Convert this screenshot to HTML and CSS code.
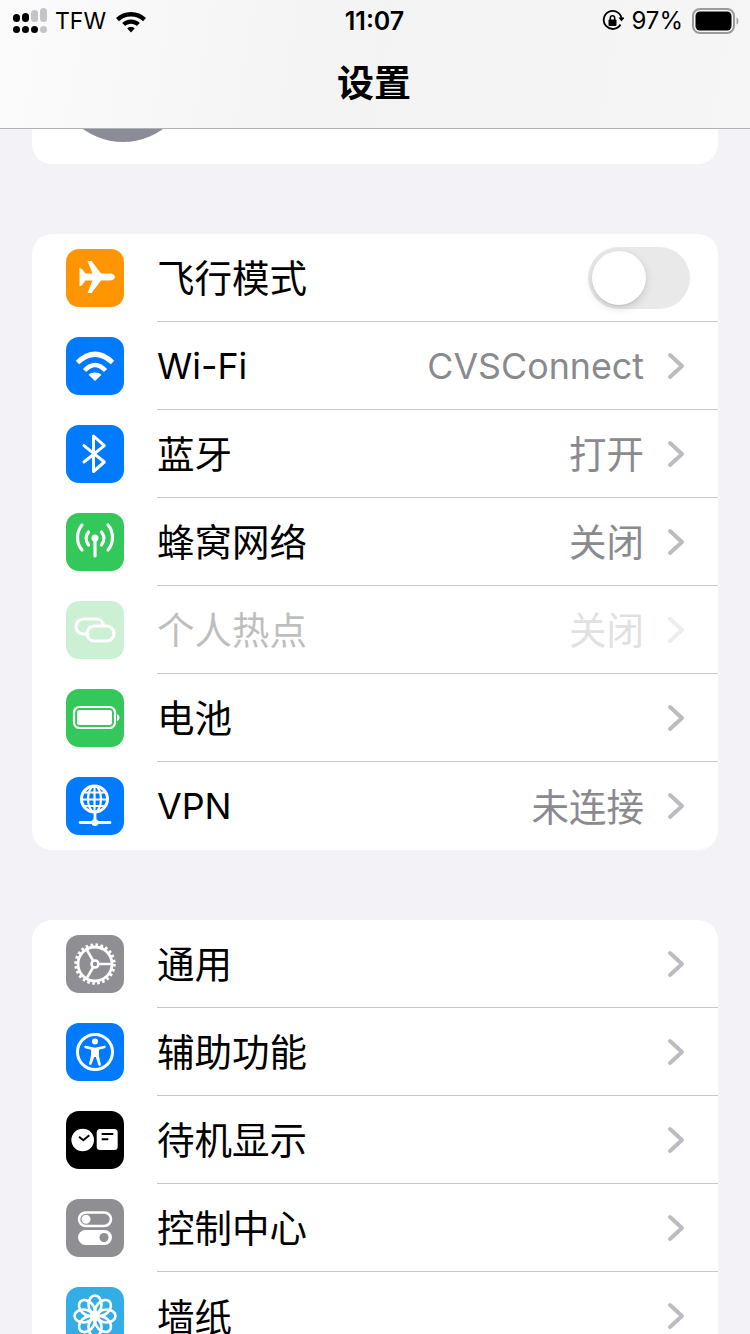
FILE: index.html

```html
<!DOCTYPE html>
<html lang="zh-CN">
<head>
  <meta charset="UTF-8">
  <title>设置</title>
  <link rel="stylesheet" href="styles.css">
</head>
<body>
  <header class="nav">
    <div class="status">
      <div class="status-left">
        <svg class="signal" width="34" height="26" viewBox="0 0 34 26">
          <g fill="#000"><rect x="0" y="6" width="7" height="8" rx="3.500"/><rect x="9" y="5" width="7" height="9" rx="3.500"/><rect x="0" y="18" width="7" height="7" rx="3.500"/><rect x="9" y="18" width="7" height="7" rx="3.500"/><rect x="18" y="18" width="7" height="7" rx="3.500"/></g>
          <g fill="#c4c4c6"><rect x="18" y="2" width="7" height="12" rx="3.500"/><rect x="27" y="0" width="7" height="14" rx="3.500"/><rect x="27" y="18" width="7" height="7" rx="3.500"/></g>
        </svg>
        <span class="carrier">TFW</span>
        <svg width="32" height="24" viewBox="0 0 32 24"><path d="M16 3C10 3 5 5.200 1 9l3 3.200C7 9.200 11.200 7.400 16 7.400s9 1.800 12 4.800L31 9c-4-3.800-9-6-15-6zM16 10.500c-3.500 0-6.500 1.300-8.800 3.500l3 3.100c1.500-1.400 3.500-2.300 5.800-2.300s4.300.9 5.800 2.300l3-3.100c-2.300-2.200-5.300-3.500-8.800-3.500zM16 18c-1.500 0-2.800.5-3.700 1.400L16 23.500l3.700-4.100C18.800 18.500 17.500 18 16 18z"/></svg>
      </div>
      <div class="status-time">11:07</div>
      <div class="status-right">
        <svg class="lock" width="22" height="22" viewBox="0 0 22 22"><path d="M18.500 14.500A9 9 0 1 1 19.500 8" fill="none" stroke="#000" stroke-width="1.800"/><path d="M16.500 7.500h6l-3 4z"/><rect x="6.500" y="9.500" width="8" height="6.500" rx="1"/><path d="M8.300 10V8a2.200 2.200 0 0 1 4.400 0v2" fill="none" stroke="#000" stroke-width="1.500"/></svg>
        <span class="percent">97%</span>
        <svg width="48" height="26" viewBox="0 0 48 26"><rect x="1" y="1" width="41" height="24" rx="7" fill="none" stroke="#9a9a9c" stroke-width="2"/><rect x="3.500" y="3.500" width="36" height="19" rx="4.500"/><path d="M44.500 9.500c1.500.5 2 2 2 3.500s-.5 3-2 3.500z" fill="#a8a8aa"/></svg>
      </div>
    </div>
    <h1 class="nav-title">设置</h1>
  </header>

  <main class="content">
    <section class="group profile"><div class="avatar"></div></section>

    <section class="group">
      <div class="row">
        <div class="icon orange"><svg width="58" height="58" viewBox="0 0 58 58"><path fill="#fff" d="M49 28c0 2-3 3.500-5 3.500h-9L25.500 44h-4l5-12.500h-7l-3 4Q15 37 13.500 37V19Q15 19 16.500 20.500l3 4h7L21.500 12h4L35 24.500h9c2 0 5 1.500 5 3.500z"/></svg></div>
        <div class="row-body"><span class="label">飞行模式</span><div class="toggle"><div class="knob"></div></div></div>
      </div>
      <div class="row">
        <div class="icon blue"><svg width="58" height="58" viewBox="0 0 58 58"><g fill="none" stroke="#fff"><path stroke-width="5" d="M11.500 25.500Q29 9 46.500 25.500"/><path stroke-width="4.500" d="M18.500 33.500Q29 22.500 39.500 33.500"/></g><path fill="#fff" d="M29 35.500c-2.500 0-5 .8-6.500 2.300L29 44l6.500-6.200c-1.500-1.500-4-2.300-6.500-2.300z"/></svg></div>
        <div class="row-body"><span class="label latin">Wi-Fi</span><span class="value latin">CVSConnect</span><svg class="chevron" width="18" height="28" viewBox="0 0 18 28"><path d="M3 3l12 11L3 25"/></svg></div>
      </div>
      <div class="row">
        <div class="icon blue"><svg width="58" height="58" viewBox="0 0 58 58"><path fill="none" stroke="#fff" stroke-width="3" stroke-linecap="round" stroke-linejoin="round" d="M18 20.700L38.300 37 27.500 46.500V11L38.300 20.700 18 37"/></svg></div>
        <div class="row-body"><span class="label">蓝牙</span><span class="value">打开</span><svg class="chevron" width="18" height="28" viewBox="0 0 18 28"><path d="M3 3l12 11L3 25"/></svg></div>
      </div>
      <div class="row">
        <div class="icon green"><svg width="58" height="58" viewBox="0 0 58 58"><g fill="none" stroke="#fff" stroke-width="3.200" stroke-linecap="round"><path d="M29 26v17"/><path d="M22.500 32c-3-4-3-9 0-13"/><path d="M35.500 32c3-4 3-9 0-13"/><path d="M16 37c-6-7-6-18 0-25"/><path d="M42 37c6-7 6-18 0-25"/></g><circle cx="29" cy="25" r="3.500" fill="#fff"/></svg></div>
        <div class="row-body"><span class="label">蜂窝网络</span><span class="value">关闭</span><svg class="chevron" width="18" height="28" viewBox="0 0 18 28"><path d="M3 3l12 11L3 25"/></svg></div>
      </div>
      <div class="row disabled">
        <div class="icon green"><svg width="58" height="58" viewBox="0 0 58 58"><g fill="none" stroke="#fff" stroke-width="3.200" stroke-linecap="round"><path d="M22.500 33h-5a7.500 7.500 0 0 1 0-15h13a7.500 7.500 0 0 1 7 7"/><rect x="21" y="25" width="27" height="15" rx="7.500"/></g></svg></div>
        <div class="row-body"><span class="label">个人热点</span><span class="value">关闭</span><svg class="chevron" width="18" height="28" viewBox="0 0 18 28"><path d="M3 3l12 11L3 25"/></svg></div>
      </div>
      <div class="row">
        <div class="icon green"><svg width="58" height="58" viewBox="0 0 58 58"><rect x="8" y="18" width="41" height="21" rx="5.500" fill="none" stroke="#fff" stroke-width="2.200"/><rect x="11" y="21" width="35" height="15" rx="2.500" fill="#fff"/><path d="M51 25c1.500.5 2.500 2 2.500 3.500s-1 3-2.500 3.500z" fill="#fff"/></svg></div>
        <div class="row-body"><span class="label">电池</span><svg class="chevron" width="18" height="28" viewBox="0 0 18 28"><path d="M3 3l12 11L3 25"/></svg></div>
      </div>
      <div class="row">
        <div class="icon blue"><svg width="58" height="58" viewBox="0 0 58 58"><g fill="none" stroke="#fff"><circle cx="28.500" cy="22" r="13" stroke-width="3"/><ellipse cx="28.500" cy="22" rx="6.500" ry="13" stroke-width="2.200"/><path stroke-width="2.200" d="M28.500 9v26M17 15.500h23M15 22.500h27M17 29h23"/></g><path fill="none" stroke="#fff" stroke-width="2.800" stroke-linecap="round" d="M29 36v9M14 45.500h30"/><circle cx="29" cy="45.500" r="3.500" fill="#fff"/></svg></div>
        <div class="row-body"><span class="label latin">VPN</span><span class="value">未连接</span><svg class="chevron" width="18" height="28" viewBox="0 0 18 28"><path d="M3 3l12 11L3 25"/></svg></div>
      </div>
    </section>

    <section class="group">
      <div class="row">
        <div class="icon gray"><svg width="58" height="58" viewBox="0 0 58 58"><circle cx="29" cy="29" r="19" fill="none" stroke="#fff" stroke-width="3.400" stroke-dasharray="2.600 2.370"/><circle cx="29" cy="29" r="17" fill="none" stroke="#fff" stroke-width="2.800"/><g fill="none" stroke="#fff" stroke-width="2.600"><circle cx="29" cy="29" r="3.500"/><path d="M32.500 29H46M27.250 26L21 15.100M27.250 32L21 42.900"/></g></svg></div>
        <div class="row-body"><span class="label">通用</span><svg class="chevron" width="18" height="28" viewBox="0 0 18 28"><path d="M3 3l12 11L3 25"/></svg></div>
      </div>
      <div class="row">
        <div class="icon blue"><svg width="58" height="58" viewBox="0 0 58 58"><circle cx="29" cy="29" r="17.500" fill="none" stroke="#fff" stroke-width="3"/><circle cx="29" cy="18.500" r="3" fill="#fff"/><path fill="#fff" d="M19.800 22.800c-.8-.2-1.400.3-1.500 1-.1.700.3 1.200 1 1.400l5.700 1.500v5.500l-1.800 8c-.2.800.2 1.400.9 1.600.7.200 1.300-.2 1.500-.9L28.200 34h1.600l2.600 7.900c.2.700.8 1.100 1.500.9.700-.2 1.100-.8.900-1.600l-1.800-8V26.700l5.700-1.500c.7-.2 1.100-.7 1-1.400-.1-.7-.7-1.200-1.500-1L29 24.800z"/></svg></div>
        <div class="row-body"><span class="label">辅助功能</span><svg class="chevron" width="18" height="28" viewBox="0 0 18 28"><path d="M3 3l12 11L3 25"/></svg></div>
      </div>
      <div class="row">
        <div class="icon black"><svg width="58" height="58" viewBox="0 0 58 58"><circle cx="16.700" cy="29" r="11.300" fill="#fff"/><path d="M13 25.700l4.300 3.600 6-5" fill="none" stroke="#000" stroke-width="2"/><rect x="30.700" y="18" width="21" height="21" rx="3.500" fill="#fff"/><path d="M35.700 23h11.600M35.700 28.300h6.600" stroke="#000" stroke-width="2"/></svg></div>
        <div class="row-body"><span class="label">待机显示</span><svg class="chevron" width="18" height="28" viewBox="0 0 18 28"><path d="M3 3l12 11L3 25"/></svg></div>
      </div>
      <div class="row">
        <div class="icon gray"><svg width="58" height="58" viewBox="0 0 58 58"><rect x="13" y="13.500" width="32" height="13.500" rx="6.750" fill="none" stroke="#fff" stroke-width="2.600"/><circle cx="20" cy="20.300" r="4.500" fill="#fff"/><rect x="12" y="31" width="34" height="15" rx="7.500" fill="#fff"/><circle cx="38" cy="38.500" r="4.500" fill="#8e8e93"/></svg></div>
        <div class="row-body"><span class="label">控制中心</span><svg class="chevron" width="18" height="28" viewBox="0 0 18 28"><path d="M3 3l12 11L3 25"/></svg></div>
      </div>
      <div class="row">
        <div class="icon sky"><svg width="58" height="58" viewBox="0 0 58 58"><g fill="none" stroke="#fff" stroke-width="2.600"><circle cx="29" cy="29" r="3.500" fill="#fff"/><ellipse cx="29" cy="17.500" rx="6.500" ry="9"/><ellipse cx="29" cy="40.500" rx="6.500" ry="9"/><ellipse cx="17.500" cy="29" rx="9" ry="6.500"/><ellipse cx="40.500" cy="29" rx="9" ry="6.500"/><ellipse cx="29" cy="17.500" rx="6.500" ry="9" transform="rotate(45 29 29)"/><ellipse cx="29" cy="40.500" rx="6.500" ry="9" transform="rotate(45 29 29)"/><ellipse cx="17.500" cy="29" rx="9" ry="6.500" transform="rotate(45 29 29)"/><ellipse cx="40.500" cy="29" rx="9" ry="6.500" transform="rotate(45 29 29)"/></g></svg></div>
        <div class="row-body"><span class="label">墙纸</span><svg class="chevron" width="18" height="28" viewBox="0 0 18 28"><path d="M3 3l12 11L3 25"/></svg></div>
      </div>
    </section>
  </main>
</body>
</html>
```

FILE: styles.css

```css
html, body {
  margin: 0;
  height: 1334px;
  overflow: hidden;
}
body {
  background-color: #f2f2f7;
  color: #000;
  font-family: "Inter", "Noto Sans CJK SC", sans-serif;
}

/* top bar */
.nav {
  height: 128px;
  background: linear-gradient(100deg, #fbfbfc 0%, #f3f3f4 50%, #f6f6f7 100%);
  border-bottom: 1px solid #b2b2b4;
}
.status {
  height: 41px;
  padding: 0 10px 0 13px;
  display: grid;
  grid-template-columns: 1fr auto 1fr;
  align-items: center;
  font-size: 25px;
}
.status-left, .status-right {
  display: flex;
  align-items: center;
}
.status-left { gap: 9px; }
.signal { margin-right: -1px; }
.carrier { font-size: 23px; }
.status-right {
  justify-content: flex-end;
  gap: 9px;
}
.lock { margin-right: -2px; }
.percent { font-size: 24px; }
.status-time {
  font-weight: 600;
  margin-right: 4px;
}
.nav-title {
  margin: 0;
  padding-right: 2px;
  font-size: 37px;
  line-height: 86px;
  font-weight: 700;
  text-align: center;
}

/* list */
.group {
  background: #fff;
  border-radius: 20px;
  margin: 0 32px 70px;
  overflow: hidden;
}
.profile {
  height: 35px;
  border-radius: 0 0 20px 20px;
}
.avatar {
  width: 136px;
  height: 136px;
  margin: -123px 0 0 23px;
  border-radius: 50%;
  background: #8a8c97;
}
.row {
  height: 88px;
  padding-left: 34px;
  display: flex;
  align-items: center;
  gap: 33px;
}
.row:last-child .row-body { border-bottom: none; }
.icon {
  width: 58px;
  height: 58px;
  flex: none;
  border-radius: 13px;
}
.icon svg { display: block; }
.orange { background: #ff9500; }
.blue { background: #007aff; }
.green { background: #34c759; }
.gray { background: #8e8e93; }
.black { background: #000; }
.sky { background: #32ade6; }
.row-body {
  flex: 1;
  height: 87px;
  padding-right: 33px;
  border-bottom: 1px solid #c6c6c8;
  display: flex;
  align-items: center;
}
.label, .value {
  font-size: 37.5px;
  padding-bottom: 4px;
}
.label { margin-right: auto; }
.value {
  color: #8a8a8e;
  margin-right: 23px;
}
.label.latin, .value.latin {
  font-size: 35.8px;
  padding-bottom: 0;
}
.chevron {
  flex: none;
  fill: none;
  stroke: #bcbcc0;
  stroke-width: 4;
  stroke-linecap: round;
  stroke-linejoin: round;
}
.disabled .icon, .disabled .label, .disabled .value, .disabled .chevron { opacity: .25; }

.toggle {
  width: 102px;
  height: 62px;
  margin-right: -5px;
  padding: 4px;
  box-sizing: border-box;
  border-radius: 31px;
  background: #e9e9ea;
}
.knob {
  width: 54px;
  height: 54px;
  border-radius: 50%;
  background: #fff;
  box-shadow: 0 3px 8px rgba(0, 0, 0, .15), 0 1px 1px rgba(0, 0, 0, .08);
}
```
